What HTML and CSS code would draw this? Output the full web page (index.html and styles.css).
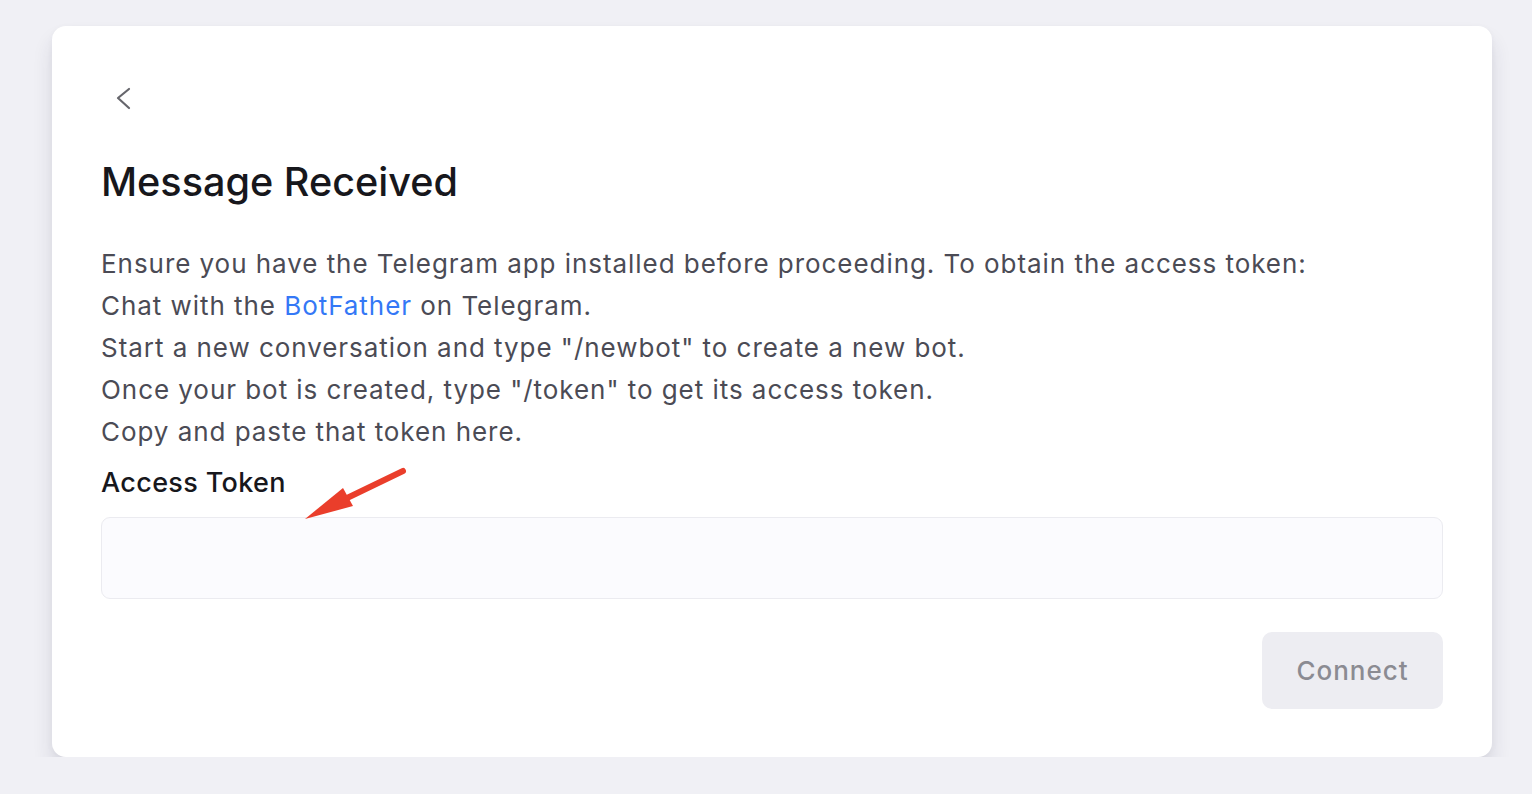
FILE: index.html
```html
<!DOCTYPE html>
<html>
<head>
<meta charset="utf-8">
<link rel="stylesheet" href="styles.css">
</head>
<body>
<div class="page">
  <div class="card">
    <button class="back" aria-label="Back">
      <svg width="24" height="24" viewBox="0 0 24 24" fill="none"><path d="M17 3 L6 12 L17 22" stroke="#66666c" stroke-width="2.2" stroke-linecap="round" stroke-linejoin="round"/></svg>
    </button>
    <h1 class="title">Message Received</h1>
    <div class="desc">
      <p>Ensure you have the Telegram app installed before proceeding. To obtain the access token:</p>
      <p>Chat with the <a class="link" href="#">BotFather</a> on Telegram.</p>
      <p>Start a new conversation and type "/newbot" to create a new bot.</p>
      <p>Once your bot is created, type "/token" to get its access token.</p>
      <p>Copy and paste that token here.</p>
    </div>
    <div class="field">
      <label class="label">Access Token</label>
      <input class="input" type="text">
      <svg class="arrow" width="120" height="70" viewBox="0 0 120 70">
        <line x1="110" y1="10" x2="52" y2="38" stroke="#ea3e2b" stroke-width="6" stroke-linecap="round"/>
        <polygon points="12,58 50,27 60,45" fill="#ea3e2b"/>
      </svg>
    </div>
    <div class="actions">
      <button class="connect">Connect</button>
    </div>
  </div>
</div>
</body>
</html>
```

FILE: styles.css
```css
html, body {
  margin: 0;
  padding: 0;
  background: #f0f0f5;
  font-family: Inter, "Noto Sans", sans-serif;
}
.page {
  padding: 26px 40px 0 52px;
}
.card {
  width: 1440px;
  height: 731px;
  box-sizing: border-box;
  background: #ffffff;
  border-radius: 14px;
  box-shadow: 0 14px 20px rgba(40, 40, 70, 0.12), 0 2px 6px rgba(40, 40, 70, 0.04);
  padding: 60px 49px 48px 49px;
  display: flex;
  flex-direction: column;
}
.back {
  align-self: flex-start;
  width: 24px;
  height: 24px;
  padding: 0;
  margin-left: 11px;
  border: 0;
  background: none;
  display: flex;
}
.title {
  margin: 50px 0 0 0;
  font-size: 39.6px;
  line-height: 44px;
  font-weight: 500;
  color: #17171c;
  letter-spacing: 0;
}
.desc {
  margin-top: 39px;
  color: #4b4b55;
  font-size: 26px;
  letter-spacing: 0.95px;
  line-height: 42px;
}
.desc p {
  margin: 0;
}
.link {
  color: #3478f6;
  text-decoration: none;
}
.field {
  position: relative;
  margin-top: 14px;
  display: flex;
  flex-direction: column;
}
.label {
  font-size: 27px;
  letter-spacing: 0.35px;
  line-height: 32px;
  font-weight: 500;
  color: #17171c;
}
.input {
  margin-top: 18px;
  height: 82px;
  box-sizing: border-box;
  border: 1.5px solid #ebebf0;
  border-radius: 9px;
  background: #fbfbfe;
  outline: none;
}
.arrow {
  position: absolute;
  left: 192px;
  top: -6px;
}
.actions {
  margin-top: 33px;
  display: flex;
  justify-content: flex-end;
}
.connect {
  width: 181px;
  height: 77px;
  border: 0;
  border-radius: 10px;
  background: #ededf2;
  color: #8b8b92;
  font-family: Inter, "Noto Sans", sans-serif;
  font-size: 26px;
  letter-spacing: 1px;
  font-weight: 500;
}
```
